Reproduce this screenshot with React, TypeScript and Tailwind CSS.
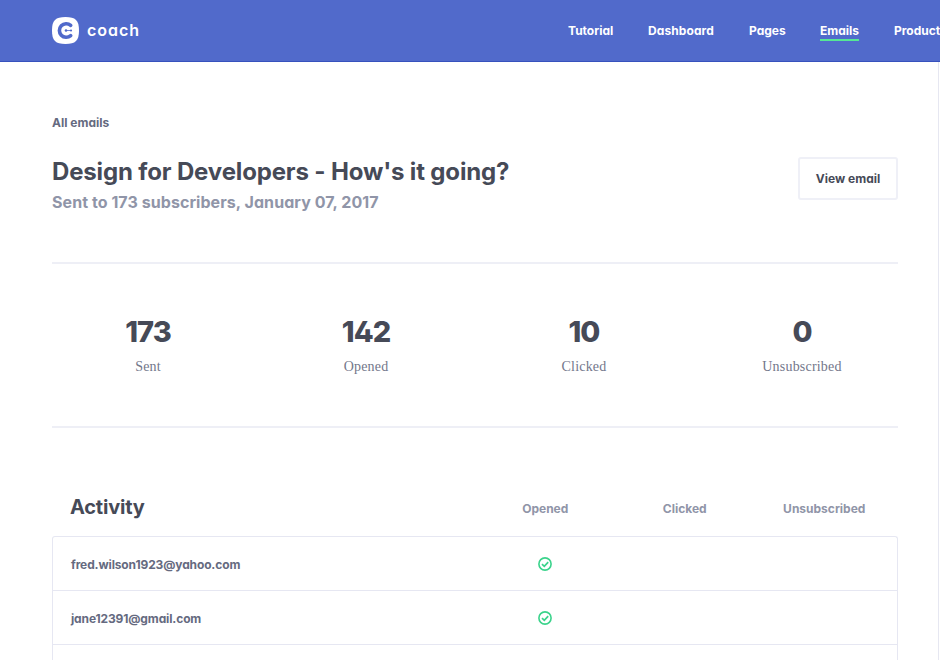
import React from "react";

const navItems = [
  { label: "Tutorial", style: "w-[45px] tracking-[0px]" },
  { label: "Dashboard", style: "w-[66px] tracking-[0.1px]" },
  { label: "Pages", style: "w-[36px] tracking-[0px]" },
  { label: "Emails", style: "w-[39px] tracking-[0px]", active: true },
  { label: "Product", style: "w-[46px] tracking-[0px]" },
];

const stats = [
  { value: "173", label: "Sent" },
  { value: "142", label: "Opened" },
  { value: "10", label: "Clicked" },
  { value: "0", label: "Unsubscribed" },
];

const rows = [
  { email: "fred.wilson1923@yahoo.com", opened: true },
  { email: "jane12391@gmail.com", opened: true },
  { email: "", opened: false },
];

function Logo() {
  return (
    <svg className="shrink-0" width="27" height="27" viewBox="0 0 27 27" fill="none">
      <path
        d="M13.5 0C23.5 0 27 3.2 27 13.5S23.5 27 13.5 27 0 23.8 0 13.5 3.5 0 13.5 0Z"
        fill="#fff"
      />
      <path
        d="M18.7 8.4A6.8 6.8 0 1 0 18.7 18.6"
        stroke="#516acb"
        strokeWidth="3.6"
        strokeLinecap="round"
      />
      <path d="M14 13.5H18.5" stroke="#516acb" strokeWidth="0.8" />
      <circle cx="14" cy="13.5" r="1.3" fill="#516acb" />
      <circle cx="19" cy="13.5" r="1.1" fill="#516acb" />
    </svg>
  );
}

function Wordmark() {
  return (
    <span className="block pb-[2px] text-[16px] leading-[20px] font-semibold tracking-[1px] text-white">
      coach
    </span>
  );
}

function Check() {
  return (
    <svg width="14" height="14" viewBox="0 0 14 14" fill="none" stroke="#3ad38b">
      <circle cx="7" cy="7" r="6.1" strokeWidth="1.6" />
      <path d="M4 7.1L6.3 9.3L10.2 5.1" strokeWidth="1.7" />
    </svg>
  );
}

export default function App() {
  return (
    <div className="h-[660px] w-[940px] overflow-hidden bg-white font-[Inter,sans-serif] whitespace-nowrap text-[#464a57] [font-feature-settings:'cv11','cv02']">
      <header className="flex h-[62px] items-center border-b border-[#3751bd] bg-[#516acb] pl-[52px]">
        <Logo />
        <div className="ml-[8px] w-[480px] shrink-0">
          <Wordmark />
        </div>
        <nav className="ml-[1px] flex shrink-0 gap-[35px]">
          {navItems.map((item) => (
            <a
              key={item.label}
              className={`${item.style} flex h-[20px] shrink-0 items-center border-b-2 pt-[3px] text-[12px] font-bold text-white ${
                item.active ? "border-[#55e795]" : "border-transparent"
              }`}
            >
              {item.label}
            </a>
          ))}
        </nav>
      </header>

      <main className="h-[598px] w-[939px] border-r border-[#e6e7f1] pt-[51px] pr-[40px] pl-[52px]">
        <a className="block h-[20px] text-[12px] leading-[20px] font-bold text-[#656a80]">
          All emails
        </a>

        <section className="flex h-[131px] items-start justify-between border-b-2 border-[#eeeff6] pt-[24px]">
          <div>
            <h1 className="h-[30px] text-[24px] leading-[30px] font-bold tracking-[-0.15px]">
              Design for Developers - How's it going?
            </h1>
            <p className="mt-[4px] h-[22px] text-[16px] leading-[22px] font-bold tracking-[0.06px] text-[#9095a8]">
              Sent to 173 subscribers, January 07, 2017
            </p>
          </div>
          <button className="h-[43px] w-[100px] rounded-[3px] border-2 border-[#eff0f7] pt-px text-[12px] font-bold">
            View email
          </button>
        </section>

        <section className="grid h-[164px] grid-cols-4 gap-[26px] border-b-2 border-[#eeeff6] pt-[50px] text-center">
          {stats.map((s) => (
            <div key={s.label}>
              <div className="h-[36px] text-[29px] leading-[36px] font-extrabold tracking-[-1px]">
                {s.value}
              </div>
              <div className="mt-[7px] font-['Liberation_Serif',serif] text-[14px] leading-[20px] tracking-[0.2px] text-[#73778b]">
                {s.label}
              </div>
            </div>
          ))}
        </section>

        <section>
          <div className="flex h-[108px] items-start pt-[65px] pr-[4px] pl-[18px]">
            <h2 className="flex-1 text-[20px] leading-[28px] font-bold tracking-[-0.2px]">Activity</h2>
            {["Opened", "Clicked", "Unsubscribed"].map((h) => (
              <div
                key={h}
                className="mt-[6px] w-[139.5px] text-center text-[12px] leading-[20px] font-bold text-[#9095a8]"
              >
                {h}
              </div>
            ))}
          </div>
          <div className="rounded-t-[3px] border border-b-0 border-[#e6e7f2]">
            {rows.map((r, i) => (
              <div
                key={i}
                className="flex h-[54px] items-center border-b border-[#e6e7f2] pr-[3px] pl-[18px]"
              >
                <span className="flex-1 pt-[2px] text-[12px] font-bold tracking-[-0.13px] text-[#656a80]">
                  {r.email}
                </span>
                <span className="flex w-[139.5px] justify-center">{r.opened && <Check />}</span>
                <span className="w-[139.5px]" />
                <span className="w-[139.5px]" />
              </div>
            ))}
          </div>
        </section>
      </main>
    </div>
  );
}
